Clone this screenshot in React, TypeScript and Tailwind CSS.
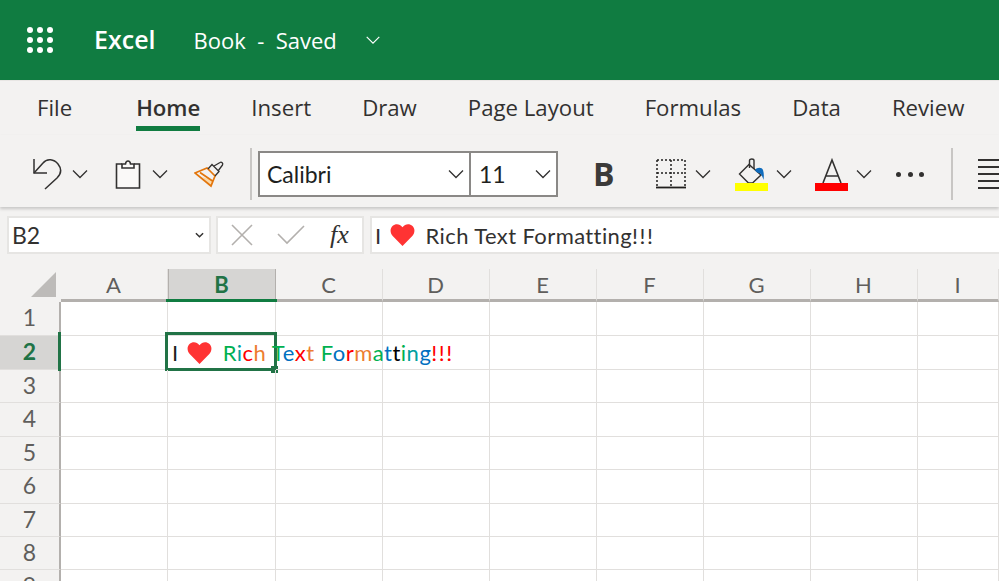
const segoe = "font-['Open_Sans',sans-serif]";
const calibri = "font-['Lato',sans-serif]";

const columns = ['A', 'B', 'C', 'D', 'E', 'F', 'G', 'H', 'I'];
const rows = [1, 2, 3, 4, 5, 6, 7, 8, 9];

const richText: [string, string][] = [
  ['R', 'text-[#00b050]'], ['i', 'text-[#00a0a0]'], ['c', 'text-[#ff0000]'], ['h ', 'text-[#ed7d31]'],
  ['T', 'text-[#00b050]'], ['e', 'text-[#0070c0]'], ['x', 'text-[#ff0000]'], ['t ', 'text-[#ed7d31]'],
  ['F', 'text-[#00b050]'], ['o', 'text-[#0070c0]'], ['r', 'text-[#ff0000]'], ['m', 'text-[#ed7d31]'],
  ['a', 'text-[#00b050]'], ['t', 'text-[#0070c0]'], ['t', 'text-black'], ['i', 'text-[#00b050]'],
  ['n', 'text-[#00a0a0]'], ['g', 'text-[#0070c0]'], ['!!!', 'text-[#ff0000] tracking-[1.5px]'],
];

function Chevron({ className = '' }: { className?: string }) {
  return (
    <svg viewBox="0 0 16 10" className={`h-[10px] w-[16px] shrink-0 ${className}`} fill="none" stroke="currentColor" strokeWidth="1.3">
      <path d="M1 1.5 8 8.5 15 1.5" />
    </svg>
  );
}

function Heart({ className = '' }: { className?: string }) {
  return (
    <svg viewBox="0 0 24 22" className={`shrink-0 ${className}`} fill="#ff3333">
      <path d="M12 22 2.200 12C-.6 9-.6 4.600 2 2.100 4.800-.6 9.200-.5 12 3.200 14.800-.5 19.200-.6 22 2.100c2.600 2.500 2.600 6.900-.2 9.900L12 22Z" />
    </svg>
  );
}

function Waffle() {
  return (
    <div className="grid w-[26px] grid-cols-3 gap-[4px]">
      {Array.from({ length: 9 }).map((_, i) => (
        <span key={i} className="h-[6px] w-[6px] rounded-full bg-white" />
      ))}
    </div>
  );
}

function Toolbar() {
  return (
    <div className="flex h-[72px] items-center bg-[#f3f2f1] pt-[6px] text-[#323130]">
      {/* Undo */}
      <svg viewBox="0 0 30 32" className="ml-[32px] h-[32px] w-[30px] shrink-0" fill="none" stroke="#323130" strokeWidth="1.500">
        <path d="M2 1v14h13" />
        <path d="M2 15 11 5C15 0 22 1 26 6c4 5 3 10-1 14L13 31" />
      </svg>
      <Chevron className="ml-[10px]" />
      {/* Paste */}
      <svg viewBox="0 0 26 30" className="ml-[27px] h-[30px] w-[26px] shrink-0" fill="none" stroke="#323130" strokeWidth="1.600">
        <path d="M7 5H1.500v24h23V5H19" fill="#faf9f8" />
        <path d="M7 9V5h3.500c.5-4 4.500-4 5 0H19v4H7Z" fill="#faf9f8" />
      </svg>
      <Chevron className="ml-[11px]" />
      {/* Format painter */}
      <svg viewBox="0 0 32 28" className="ml-[26px] h-[28px] w-[32px] shrink-0" fill="none">
        <path d="M8 17l11 3-2 6z" fill="#fcd9a8" />
        <path d="M1 13 13 8l8 8-4 10L1 13Z M6 12.500 18.500 21" stroke="#e3760c" strokeWidth="1.700" />
        <path d="M14 9 18 4.500 25 11.500 21 16M20 6 26 2.500c1.500-1 3.500 1 2.500 2.500L24 11" stroke="#323130" strokeWidth="1.300" />
      </svg>
      <div className="ml-[24px] h-[52px] w-[2px] shrink-0 bg-[#c8c6c4]" />
      {/* Font family */}
      <div className={`ml-[6px] flex h-[46px] w-[213px] shrink-0 items-center justify-between border-2 border-[#8a8886] bg-white pl-[7px] pr-[5px] text-[23px] text-[#201f1e] ${calibri}`}>
        <span>Calibri</span>
        <Chevron className="text-[#323130]" />
      </div>
      <div className={`flex h-[46px] w-[87px] shrink-0 items-center justify-between border-2 border-l-0 border-[#8a8886] bg-white pl-[8px] pr-[5px] text-[23px] text-[#201f1e] ${calibri}`}>
        <span>11</span>
        <Chevron className="text-[#323130]" />
      </div>
      <span className={`ml-[35px] w-[26px] shrink-0 text-[32px] font-bold leading-none text-[#3b3a39] ${segoe}`}>B</span>
      {/* Borders */}
      <svg viewBox="0 0 30 30" className="ml-[37px] h-[30px] w-[30px] shrink-0" fill="none" stroke="#201f1e">
        <path d="M1 1h28M1 1v26M29 1v26M15 1v26M1 14h28" strokeDasharray="2 2" strokeWidth="1.500" />
        <path d="M0 28.500h30" strokeWidth="1.800" />
      </svg>
      <Chevron className="ml-[9px]" />
      {/* Fill colour */}
      <div className="ml-[24px] flex w-[33px] shrink-0 flex-col items-center">
        <svg viewBox="0 0 30 26" className="h-[26px] w-[30px]" fill="none" stroke="#323130" strokeWidth="1.400">
          <path d="M2.500 16 12 6.500 24 17 15.500 25h-4L2.500 16Z" />
          <path d="M12.500 10V2.500c0-2 4.500-2 4.500 0V11" />
          <path d="M18 12c2-3 7-3 8 0 1 3 1 6 .5 10-1-4-3-7-4.500-7-1.500 0-3-1-4-3Z" fill="#0f6cbd" stroke="none" />
        </svg>
        <span className="mt-[-1px] h-[8px] w-[33px] bg-[#ffff00]" />
      </div>
      <Chevron className="ml-[8px]" />
      {/* Font colour */}
      <div className="ml-[23px] flex w-[33px] shrink-0 flex-col items-center">
        <svg viewBox="0 0 24 26" className="h-[26px] w-[24px]" fill="none" stroke="#323130" strokeWidth="1.600">
          <path d="M3 25 12 2l9 23M6 18h12" />
        </svg>
        <span className="mt-[-1px] h-[8px] w-[33px] bg-[#ff0000]" />
      </div>
      <Chevron className="ml-[8px]" />
      {/* More */}
      <div className="ml-[24px] flex w-[28px] shrink-0 justify-between">
        <span className="h-[5px] w-[5px] rounded-full bg-[#323130]" />
        <span className="h-[5px] w-[5px] rounded-full bg-[#323130]" />
        <span className="h-[5px] w-[5px] rounded-full bg-[#323130]" />
      </div>
      <div className="ml-[27px] h-[52px] w-[2px] shrink-0 bg-[#c8c6c4]" />
      {/* Align */}
      <div className="ml-[25px] flex h-[30px] w-[30px] shrink-0 flex-col justify-between">
        <span className="h-[2px] bg-[#323130]" />
        <span className="h-[2px] bg-[#323130]" />
        <span className="h-[2px] bg-[#323130]" />
        <span className="h-[2px] bg-[#323130]" />
        <span className="h-[2px] bg-[#323130]" />
      </div>
    </div>
  );
}

function FormulaBar() {
  return (
    <div className="flex h-[48px] items-start pl-[7px] pt-[7px]">
      <div className={`flex h-[38px] w-[204px] items-center justify-between border-2 border-[#e6e5e3] bg-white pl-[3px] pr-[5px] text-[23px] text-[#323130] ${calibri}`}>
        <span>B2</span>
        <svg viewBox="0 0 10 6" className="h-[6px] w-[9px]" fill="none" stroke="#323130" strokeWidth="1.600">
          <path d="M1 1l4 4 4-4" />
        </svg>
      </div>
      <div className="ml-[5px] flex h-[38px] w-[148px] items-center border-2 border-[#e6e5e3] bg-white">
        <svg viewBox="0 0 22 22" className="ml-[13px] h-[22px] w-[22px]" fill="none" stroke="#b3b0ad" strokeWidth="1.600">
          <path d="M1 1l20 20M21 1 1 21" />
        </svg>
        <svg viewBox="0 0 28 20" className="ml-[24px] h-[20px] w-[28px]" fill="none" stroke="#b3b0ad" strokeWidth="1.600">
          <path d="M1 9l9 9L27 1" />
        </svg>
        <span className="ml-[25px] font-['Liberation_Serif',serif] text-[26px] italic leading-none text-[#323130]">fx</span>
      </div>
      <div className={`ml-[6px] flex h-[38px] flex-1 items-center border-2 border-r-0 border-[#e6e5e3] bg-white pl-[3px] text-[22px] tracking-[0.4px] whitespace-nowrap text-[#323130] ${calibri}`}>
        <span>I</span>
        <Heart className="ml-[8px] h-[22px] w-[25px]" />
        <span className="ml-[11px]">Rich Text Formatting<span className="tracking-[1.5px]">!!!</span></span>
      </div>
    </div>
  );
}

function Sheet() {
  return (
    <div className={`grid h-full grid-cols-[61px_107px_108px_107px_107px_107px_107px_107px_107px_81px] grid-rows-[33px_34px_34px_33px_34px_33px_34px_33px_33px_34px] bg-white text-[#605e5c] ${calibri}`}>
      <div className="relative bg-[#f3f2f1]">
        <span className="absolute bottom-[5px] right-[5px] h-0 w-0 border-b-[25px] border-l-[25px] border-b-[#bdbbb9] border-l-transparent" />
      </div>
      {columns.map((col) => (
        <div
          key={col}
          className={
            col === 'B'
              ? 'relative flex items-center justify-center border-x border-b-[3px] border-x-[#b3b0ad] border-b-[#b3b0ad] bg-[#d6d5d3] pr-px text-[22px] font-bold text-[#217346]'
              : 'flex items-center justify-center border-r border-b-[3px] border-r-[#e1dfdd] border-b-[#b3b0ad] bg-[#f3f2f1] pr-px text-[22px]'
          }
        >
          {col}
          {col === 'B' && <span className="absolute bottom-[-3px] left-[-3px] right-[-2px] h-[3px] bg-[#107c41]" />}
        </div>
      ))}

      {rows.map((row) => (
        <div key={row} className="contents">
          <div
            className={
              row === 2
                ? 'relative flex items-center justify-center border-b border-r-2 border-b-[#e1dfdd] border-r-[#b3b0ad] bg-[#d6d5d3] pb-[2px] text-[23px] font-bold text-[#217346]'
                : 'flex items-center justify-center border-b border-r-2 border-b-[#e1dfdd] border-r-[#b3b0ad] bg-[#f3f2f1] pb-[2px] text-[23px]'
            }
          >
            {row}
            {row === 2 && <span className="absolute right-[-2px] top-[-4px] h-[39px] w-[3px] bg-[#217346]" />}
          </div>
          {columns.map((col) => (
            <div key={col} className="relative border-r border-b border-[#e1dfdd]">
              {row === 2 && col === 'B' && (
                <>
                  <div className="absolute left-[-3px] top-[-4px] h-[39px] w-[112px] border-[3px] border-[#217346]" />
                  <span className="absolute right-[-3px] top-[30px] h-[7px] w-[7px] bg-[#217346]" />
                  <div className="absolute left-[4px] top-0 z-10 flex h-full items-center whitespace-nowrap text-[22px] tracking-[0.5px] text-[#201f1e]">
                    <span>I</span>
                    <Heart className="ml-[8px] h-[22px] w-[25px]" />
                    <span className="ml-[11px] whitespace-pre">
                      {richText.map(([text, color], i) => (
                        <span key={i} className={color}>{text}</span>
                      ))}
                    </span>
                  </div>
                </>
              )}
            </div>
          ))}
        </div>
      ))}
    </div>
  );
}

export default function App() {
  return (
    <div className="flex h-[581px] w-[999px] flex-col overflow-hidden bg-[#f3f2f1]">
      <header className={`flex h-[81px] shrink-0 items-center border-b border-[#e8e6e4] bg-[#107c41] text-white ${segoe}`}>
        <div className="ml-[27px]"><Waffle /></div>
        <span className="ml-[41px] text-[25px] font-semibold">Excel</span>
        <span className="ml-[38px] whitespace-pre text-[22px]">Book  -  Saved</span>
        <Chevron className="ml-[28px] scale-90" />
      </header>

      <nav className={`flex h-[54px] shrink-0 items-start gap-[51px] pl-[37px] pt-[10px] text-[22.2px] text-[#323130] ${segoe}`}>
        <span className="mr-[13px]">File</span>
        <div className="flex flex-col">
          <span className="font-semibold">Home</span>
          <span className="mt-[2px] h-[5px] bg-[#107c41]" />
        </div>
        <span>Insert</span>
        <span>Draw</span>
        <span className="whitespace-nowrap">Page Layout</span>
        <span>Formulas</span>
        <span>Data</span>
        <span>Review</span>
      </nav>

      <div className="shrink-0 shadow-[0_2px_3px_rgba(0,0,0,0.18)]">
        <Toolbar />
      </div>

      <div className="shrink-0 pt-[2px]">
        <FormulaBar />
      </div>

      <div className="flex-1 pt-[12px]">
        <Sheet />
      </div>
    </div>
  );
}
